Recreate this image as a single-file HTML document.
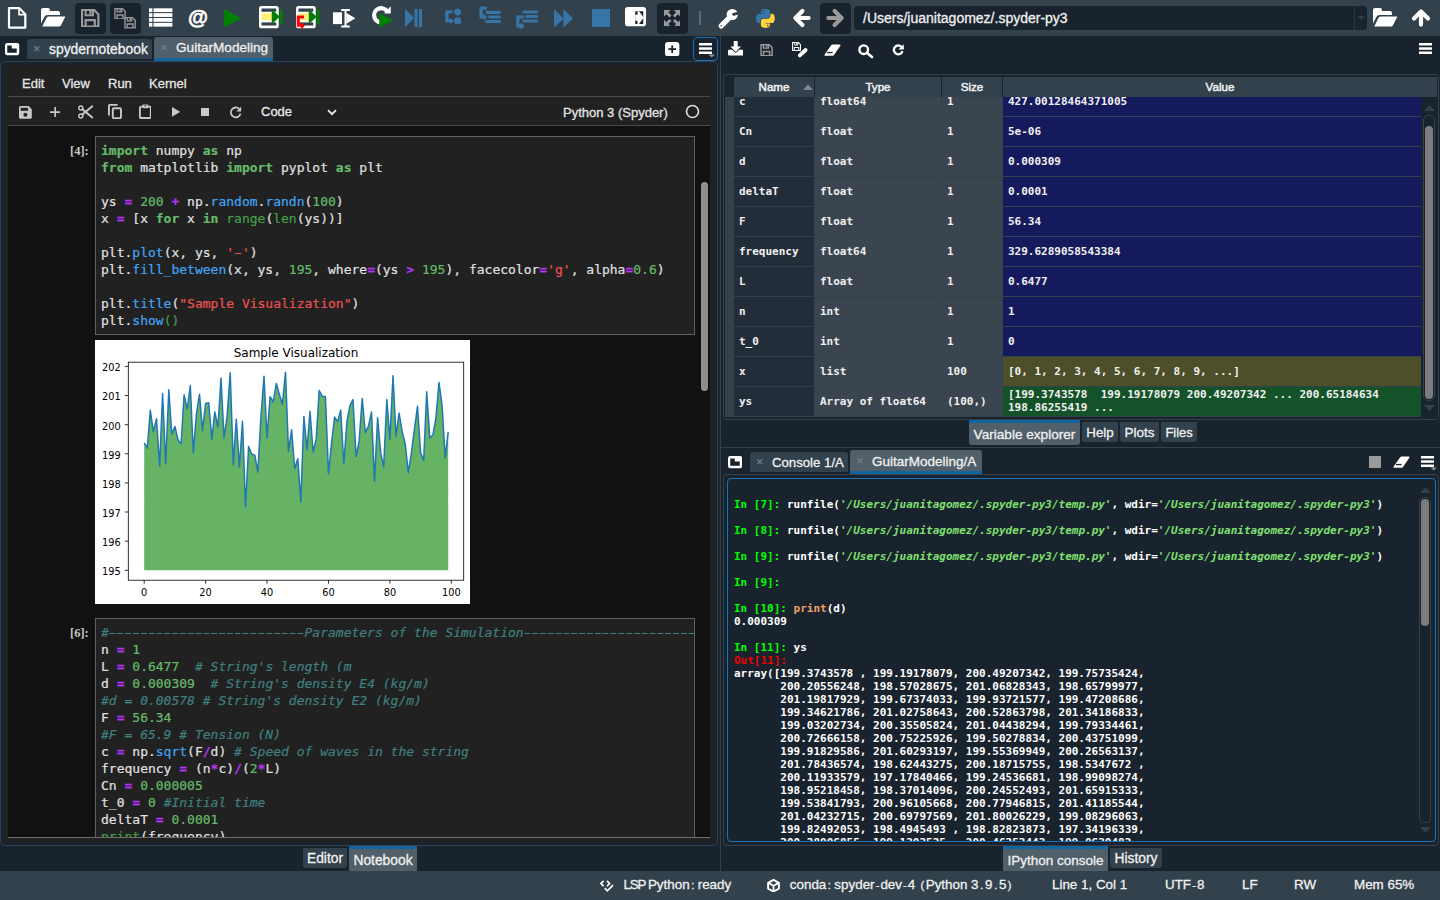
<!DOCTYPE html>
<html lang="en">
<head>
<meta charset="utf-8">
<title>Spyder</title>
<style>
*{box-sizing:border-box;margin:0;padding:0}
html,body{width:1440px;height:900px;overflow:hidden;background:#19232D;color:#F0F0F0;
  font-family:"Liberation Sans",sans-serif;font-size:13px}
.abs{position:absolute}
#topbar{position:absolute;left:0;top:0;width:1440px;height:36px;background:#32414B}
#statusbar{position:absolute;left:0;top:871px;width:1440px;height:29px;background:#32414B}
#statusbar i{font-style:normal;display:inline-block}
#statusbar .nw{letter-spacing:-1.2px;margin-right:-1px}
#statusbar .pc{margin:0 3.5px 0 1.5px;font-size:11px}
#statusbar .ph{margin:0 1.1px;font-size:11px}
#statusbar .pd{margin:0 1.7px;font-size:11px}
#statusbar .pp{margin:0 1.5px;font-size:11px}
#statusbar span{position:absolute;top:6px;font-size:13.4px;white-space:nowrap;color:#F0F0F0}
.ic{position:absolute;display:block}
.darkbtn{position:absolute;background:#19232D;border-radius:4px}
/* tabs */
.tab,.btab,#statusbar span,.ui{-webkit-text-stroke:0.3px currentColor}
.tab{position:absolute;background:#32414B;border-radius:3px 3px 0 0;color:#F0F0F0;font-size:14px;white-space:nowrap}
.tab.sel{background:#505F69;border-bottom:3px solid #1464A0}
.tab .x{position:absolute;color:#73808b;font-size:9px}
.tab .t{position:absolute}
.btab{position:absolute;background:#32414B;border-radius:0 0 3px 3px;color:#F0F0F0;font-size:14px;white-space:nowrap;text-align:center}
.btab.sel{background:#505F69;border-top:3px solid #1464A0}
/* notebook */
#nbpanel{position:absolute;left:4px;top:65px;width:710px;height:777px;background:#212121}
#nbframe{position:absolute;left:0;top:61px;width:718px;height:785px;border:1px solid #32414B;border-radius:5px}
.mono{font-family:"DejaVu Sans Mono","Liberation Mono",monospace}
.code{-webkit-text-stroke:0.2px currentColor;position:absolute;font-family:"DejaVu Sans Mono","Liberation Mono",monospace;font-size:13px;line-height:17px;white-space:pre;color:#E0E0E0}
.dsh{text-shadow:1.3px 0 currentColor,-1.3px 0 currentColor}
.k{color:#66BB6A;font-weight:bold}
.o{color:#B434F0;font-weight:bold}
.n{color:#66BB6A}
.p{color:#42A5F5}
.s{color:#EF5350}
.b{color:#43A047}
.c{color:#408080;font-style:italic}
/* variable explorer */
.vrow{position:absolute;left:727px;width:694px;height:30px}
.vc{position:absolute;top:0;height:29px;font-family:"DejaVu Sans Mono","Liberation Mono",monospace;font-size:11px;font-weight:bold;color:#F0F0F0;white-space:nowrap;line-height:29px;padding-left:5px;overflow:hidden}
.vh{top:0;height:20px;line-height:20px;text-align:center;border-right:1px solid #19232D;font-family:"Liberation Sans",sans-serif}
/* console */
.con{position:absolute;font-family:"DejaVu Sans Mono","Liberation Mono",monospace;font-size:11px;font-weight:bold;line-height:13px;white-space:pre;color:#FFFFFF}
.gi{color:#00FF00}
.ro{color:#EE0000}
.gs{color:#7FE070;font-style:italic}
.or{color:#F0A060}
</style>
</head>
<body>
<div id="topbar"></div>
<!--TOPICONS--><svg class="ic" style="left:7px;top:6px" width="21" height="24" viewBox="0 0 21 24"><path d="M2 2.2 H12.3 L18.3 8.2 V21.6 H2 Z" fill="none" stroke="#FFFFFF" stroke-width="2.2" stroke-linejoin="round"/><path d="M12 2.5 V8.6 H18" fill="none" stroke="#FFFFFF" stroke-width="1.6"/></svg>
<svg class="ic" style="left:41px;top:8px" width="25" height="19" viewBox="0 0 25 19"><path d="M0 2 Q0 0 2 0 H7 Q9 0 9 2 V3 H17 Q19 3 19 5 V7 H6.5 Q4.3 7 3.3 9 L0 15.5 Z" fill="#FFFFFF"/><path d="M1.2 18.5 L5.6 9.7 Q6.2 8.5 7.7 8.5 H24.4 L19.9 17.5 Q19.4 18.5 17.8 18.5 Z" fill="#FFFFFF"/></svg>
<div class="darkbtn" style="left:75px;top:3px;width:31px;height:31px"></div>
<svg class="ic" style="left:81px;top:8.5px" width="18.5" height="18.5" viewBox="0 0 18.5 18.5"><path d="M1 1 H13.2 L17.4 5.2 V17.5 H1 Z" fill="none" stroke="#9A9A9A" stroke-width="2.2" stroke-linejoin="round"/><path d="M4.6 1.4 V6.2 H12 V1.4" fill="none" stroke="#9A9A9A" stroke-width="2"/><rect x="8.3" y="2" width="2.3" height="3.2" fill="#9A9A9A"/><path d="M4.6 17 V11.2 H13.8 V17" fill="none" stroke="#9A9A9A" stroke-width="2.2"/></svg>
<div class="darkbtn" style="left:110px;top:3px;width:31px;height:31px"></div>
<svg class="ic" style="left:113.5px;top:7.5px" width="12.2" height="11.5" viewBox="0 0 18.5 18.5"><path d="M1 1 H13.2 L17.4 5.2 V17.5 H1 Z" fill="none" stroke="#9A9A9A" stroke-width="2.2" stroke-linejoin="round"/><path d="M4.6 1.4 V6.2 H12 V1.4" fill="none" stroke="#9A9A9A" stroke-width="2"/><rect x="8.3" y="2" width="2.3" height="3.2" fill="#9A9A9A"/><path d="M4.6 17 V11.2 H13.8 V17" fill="none" stroke="#9A9A9A" stroke-width="2.2"/></svg>
<svg class="ic" style="left:124px;top:17.3px" width="12.2" height="11.5" viewBox="0 0 18.5 18.5"><path d="M1 1 H13.2 L17.4 5.2 V17.5 H1 Z" fill="none" stroke="#9A9A9A" stroke-width="2.2" stroke-linejoin="round"/><path d="M4.6 1.4 V6.2 H12 V1.4" fill="none" stroke="#9A9A9A" stroke-width="2"/><rect x="8.3" y="2" width="2.3" height="3.2" fill="#9A9A9A"/><path d="M4.6 17 V11.2 H13.8 V17" fill="none" stroke="#9A9A9A" stroke-width="2.2"/></svg>
<svg class="ic" style="left:149.4px;top:7.7px" width="23.4" height="19.2" viewBox="0 0 23.4 19.2"><rect x="0" y="0.30" width="3.4" height="3.8" fill="#FFFFFF"/><rect x="4.5" y="0.30" width="18.9" height="3.8" fill="#FFFFFF"/><rect x="0" y="5.15" width="3.4" height="3.8" fill="#FFFFFF"/><rect x="4.5" y="5.15" width="18.9" height="3.8" fill="#FFFFFF"/><rect x="0" y="10.00" width="3.4" height="3.8" fill="#FFFFFF"/><rect x="4.5" y="10.00" width="18.9" height="3.8" fill="#FFFFFF"/><rect x="0" y="14.85" width="3.4" height="3.8" fill="#FFFFFF"/><rect x="4.5" y="14.85" width="18.9" height="3.8" fill="#FFFFFF"/></svg>
<span class="abs" style="left:188px;top:4px;font-size:20.5px;font-weight:bold;color:#FFFFFF;line-height:26px;-webkit-text-stroke:0.6px #FFFFFF">@</span>
<svg class="ic" style="left:224px;top:8.5px" width="18" height="19" viewBox="0 0 18 19"><path d="M0 0 L17.3 9.3 L0 18.6 Z" fill="#008000"/></svg>
<svg class="ic" style="left:258.5px;top:5.75px" width="24" height="23" viewBox="0 0 24 23"><rect x="0" y="0" width="19.75" height="22.25" rx="2.6" fill="#FFFFFF"/><rect x="2.5" y="2.5" width="14.75" height="3.25" fill="#32414B"/><rect x="2.5" y="16.4" width="14.75" height="3.1" fill="#32414B"/><rect x="2.5" y="7.25" width="10.5" height="7" fill="#FFF176"/><path d="M12.75 3.25 L20.75 10.75 L12.75 18.25 Z" fill="#008000"/><rect x="20.75" y="3.25" width="2.75" height="15" fill="#008000"/></svg>
<svg class="ic" style="left:296px;top:5.75px" width="24" height="24" viewBox="0 0 24 24"><rect x="0" y="0" width="19.75" height="22.25" rx="2.6" fill="#FFFFFF"/><rect x="2.5" y="2.5" width="14.75" height="3.25" fill="#32414B"/><rect x="2.5" y="16.4" width="14.75" height="3.1" fill="#32414B"/><rect x="2.5" y="7.25" width="10.5" height="7" fill="#FFF176"/><path d="M12.75 3.25 L20.75 10.75 L12.75 18.25 Z" fill="#008000"/><rect x="20.75" y="3.25" width="2.75" height="15" fill="#008000"/><path d="M8 10.9 H2.25 V19.2 H5.5" fill="none" stroke="#FF0000" stroke-width="3"/><path d="M5 16.1 L8.9 19.75 L5 23.5 Z" fill="#FF0000"/></svg>
<svg class="ic" style="left:332.5px;top:8.5px" width="23" height="19" viewBox="0 0 23 19"><rect x="0" y="3.3" width="9" height="11.8" fill="#FFFFFF"/><path d="M8.2 1 H16.8 M8.2 17.6 H16.8 M12.5 1 V17.6" stroke="#FFFFFF" stroke-width="2" fill="none"/><path d="M13.3 4 L22.4 9.3 L13.3 14.8 Z" fill="#FFFFFF"/></svg>
<svg class="ic" style="left:370.5px;top:5.2px" width="23" height="24" viewBox="0 0 23 24"><path d="M16.07 6.23 A7.1 7.1 0 1 0 11.48 17.29" fill="none" stroke="#FFFFFF" stroke-width="4.2"/><path d="M19.75 1.3 V8.6 H13.1 Z" fill="#FFFFFF"/><path d="M8.25 8.05 L22.25 15.55 L8.25 23.05 Z" fill="#008000"/></svg>
<svg class="ic" style="left:405px;top:9px" width="18" height="18.5" viewBox="0 0 18 18.5"><path d="M0 0 L9.2 9.1 L0 18.2 Z" fill="#3775A9"/><rect x="9.6" y="0" width="3" height="18.2" fill="#3775A9"/><rect x="14" y="0" width="3.1" height="18.2" fill="#3775A9"/></svg>
<svg class="ic" style="left:445px;top:8px" width="17" height="17" viewBox="0 0 17 17"><circle cx="12.6" cy="4.1" r="3.4" fill="#3775A9"/><circle cx="12.6" cy="12.75" r="3.6" fill="#3775A9"/><path d="M7.4 3.9 H1.9 V12.9 H5.4" fill="none" stroke="#3775A9" stroke-width="3.3" stroke-linejoin="round"/><path d="M5 9.7 L8.9 12.9 L5 16.1 Z" fill="#3775A9"/></svg>
<svg class="ic" style="left:479px;top:5.5px" width="22" height="18" viewBox="0 0 22 18"><path d="M7.9 2.1 H2.1 V11 H4.8" fill="none" stroke="#3775A9" stroke-width="3.3" stroke-linejoin="round"/><path d="M4.5 7.7 L8.3 11 L4.5 14.5 Z" fill="#3775A9"/><rect x="6.75" y="4.75" width="15" height="3.3" rx="0.8" fill="#3775A9"/><rect x="9.4" y="9.6" width="12.35" height="3" rx="0.8" fill="#3775A9"/><rect x="6.4" y="14.1" width="15.35" height="3" rx="0.8" fill="#3775A9"/></svg>
<svg class="ic" style="left:516px;top:10px" width="22.5" height="20" viewBox="0 0 22.5 20"><rect x="6.5" y="0.6" width="15.4" height="3" rx="0.8" fill="#3775A9"/><rect x="9.5" y="5.1" width="12.4" height="3" rx="0.8" fill="#3775A9"/><rect x="6.5" y="9.6" width="15.4" height="3" rx="0.8" fill="#3775A9"/><path d="M8 6.8 H1.8 V16 H5" fill="none" stroke="#3775A9" stroke-width="3.3" stroke-linejoin="round"/><path d="M4.4 12.6 L8.8 16 L4.4 19.4 Z" fill="#3775A9"/></svg>
<svg class="ic" style="left:553.5px;top:8.8px" width="19.5" height="19" viewBox="0 0 19.5 19"><path d="M0 0 L9.6 9.4 L0 18.8 Z M9.4 0 L19 9.4 L9.4 18.8 Z" fill="#3775A9"/></svg>
<svg class="ic" style="left:592px;top:8.5px" width="18" height="18.5" viewBox="0 0 18 18.5"><rect width="18" height="18.5" fill="#3775A9"/></svg>
<svg class="ic" style="left:624.75px;top:7px" width="21" height="19.5" viewBox="0 0 21 19.5"><rect x="0" y="0" width="21" height="19.25" rx="2.8" fill="#FFFFFF"/><rect x="10.25" y="4.25" width="8" height="12.75" fill="#19232D"/><path d="M10.25 7.75 H12.5 V4.25 H14 L18.75 10.5 L14 17 H12.5 V13.75 H10.25 Z" fill="#FFFFFF"/></svg>
<div class="darkbtn" style="left:657px;top:3px;width:31px;height:31px"></div>
<svg class="ic" style="left:663.6px;top:9.8px" width="16.5" height="16.5" viewBox="0 0 16.5 16.5"><g transform="translate(8.2 8.2) scale(1 1)"><path d="M-8.2 -8.2 H-1.6 L-3.9 -5.9 L-0.7 -2.7 L-2.7 -0.7 L-5.9 -3.9 L-8.2 -1.6 Z" fill="#9A9A9A"/></g><g transform="translate(8.2 8.2) scale(-1 1)"><path d="M-8.2 -8.2 H-1.6 L-3.9 -5.9 L-0.7 -2.7 L-2.7 -0.7 L-5.9 -3.9 L-8.2 -1.6 Z" fill="#9A9A9A"/></g><g transform="translate(8.2 8.2) scale(1 -1)"><path d="M-8.2 -8.2 H-1.6 L-3.9 -5.9 L-0.7 -2.7 L-2.7 -0.7 L-5.9 -3.9 L-8.2 -1.6 Z" fill="#9A9A9A"/></g><g transform="translate(8.2 8.2) scale(-1 -1)"><path d="M-8.2 -8.2 H-1.6 L-3.9 -5.9 L-0.7 -2.7 L-2.7 -0.7 L-5.9 -3.9 L-8.2 -1.6 Z" fill="#9A9A9A"/></g></svg>
<div class="abs" style="left:699px;top:11px;width:2px;height:14px;background:#5B6A75"></div>
<svg class="ic" style="left:717px;top:7.5px" width="22" height="22" viewBox="0 0 22 22"><path d="M4.2 17.9 L12 10.2" stroke="#FFFFFF" stroke-width="5.2" stroke-linecap="round"/><circle cx="15.25" cy="6.5" r="5.6" fill="#FFFFFF"/><path d="M16.6 6.3 L23 4.6" stroke="#32414B" stroke-width="2.8" stroke-linecap="round"/><circle cx="4.3" cy="17.8" r="0.8" fill="#32414B"/></svg>
<svg class="ic" style="left:756px;top:9.3px" width="19" height="19" viewBox="0 0 112 113"><path d="M54.918785,9.1927389e-4 C50.335132,0.02221727 45.957846,0.41313697 42.106285,1.0946693 30.760069,3.0991731 28.700036,7.2947714 28.700035,15.032169 l0,10.21875 26.8125,0 0,3.40625 -26.8125,0 -10.0625,0 c-7.792459,0 -14.6157588,4.683717 -16.7499998,13.59375 -2.46181998,10.212966 -2.57101508,16.586023 0,27.25 1.9059283,7.937852 6.4575432,13.593748 14.2499998,13.59375 l9.21875,0 0,-12.25 c0,-8.849902 7.657144,-16.656248 16.75,-16.65625 l26.78125,0 c7.454951,0 13.406253,-6.138164 13.40625,-13.625 l0,-25.53125 c0,-7.2663386 -6.12998,-12.7247771 -13.40625,-13.9374997 C64.281548,0.32794397 59.502438,-0.02037903 54.918785,9.1927389e-4 Z m-14.5,8.21875012611 c2.769547,0 5.03125,2.2986456 5.03125,5.1249996 -2e-6,2.816336 -2.261703,5.09375 -5.03125,5.09375 -2.779476,-1e-6 -5.03125,-2.277415 -5.03125,-5.09375 -1e-6,-2.826353 2.251774,-5.1249996 5.03125,-5.1249996 z" fill="#3776AB"/><path d="m85.637535,28.657169 0,11.90625 c0,9.230755 -7.825895,16.999999 -16.75,17 l-26.78125,0 c-7.335833,0 -13.40625,6.278483 -13.40625,13.625 l0,25.531247 c0,7.266344 6.318588,11.540324 13.40625,13.625004 8.487331,2.49561 16.626237,2.94663 26.78125,0 6.750155,-1.95439 13.406253,-5.88761 13.40625,-13.625004 l0,-10.218747 -26.78125,0 0,-3.40625 26.78125,0 13.406254,0 c7.792461,0 10.696251,-5.435408 13.406241,-13.59375 2.79933,-8.398886 2.68022,-16.475776 0,-27.25 -1.92578,-7.757441 -5.60387,-13.59375 -13.406241,-13.59375 z m-15.0625,64.65625 c2.779478,3e-6 5.03125,2.277417 5.03125,5.093747 -2e-6,2.826354 -2.251775,5.125004 -5.03125,5.125004 -2.76955,0 -5.03125,-2.29865 -5.03125,-5.125004 2e-6,-2.81633 2.261697,-5.093747 5.03125,-5.093747 z" fill="#FFD43B"/></svg>
<svg class="ic" style="left:791.6px;top:8.4px" width="20" height="20" viewBox="0 0 20 20"><path d="M4 10 H16.6 M10.4 3 L3.4 10 L10.4 17" fill="none" stroke="#FFFFFF" stroke-width="4.2" stroke-linecap="round" stroke-linejoin="round"/></svg>
<div class="darkbtn" style="left:820px;top:3px;width:31px;height:31px"></div>
<svg class="ic" style="left:825px;top:8.4px" width="20" height="20" viewBox="0 0 20 20"><g transform="translate(20 0) scale(-1 1)"><path d="M4 10 H16.6 M10.4 3 L3.4 10 L10.4 17" fill="none" stroke="#9A9A9A" stroke-width="4.2" stroke-linecap="round" stroke-linejoin="round"/></g></svg>
<div class="abs" style="left:854px;top:6px;width:513px;height:24px;background:#19232D;border-radius:4px"></div>
<div class="abs" style="left:1354px;top:6px;width:1px;height:24px;background:#2A3642"></div>
<span class="abs ui" style="left:863px;top:10px;font-size:14px;color:#F0F0F0;white-space:nowrap">/Users/juanitagomez/.spyder-py3</span>
<svg class="ic" style="left:1357.5px;top:16px" width="7" height="4" viewBox="0 0 7 4"><path d="M0 0 H7 L3.5 3.8 Z" fill="#32414B"/></svg>
<svg class="ic" style="left:1373px;top:7.8px" width="25" height="19" viewBox="0 0 25 19"><path d="M0 2 Q0 0 2 0 H7 Q9 0 9 2 V3 H17 Q19 3 19 5 V7 H6.5 Q4.3 7 3.3 9 L0 15.5 Z" fill="#FFFFFF"/><path d="M1.2 18.5 L5.6 9.7 Q6.2 8.5 7.7 8.5 H24.4 L19.9 17.5 Q19.4 18.5 17.8 18.5 Z" fill="#FFFFFF"/></svg>
<svg class="ic" style="left:1410.6px;top:8px" width="20" height="20" viewBox="0 0 20 20"><g transform="translate(20 0) rotate(90)"><path d="M4 10 H16.6 M10.4 3 L3.4 10 L10.4 17" fill="none" stroke="#FFFFFF" stroke-width="4.2" stroke-linecap="round" stroke-linejoin="round"/></g></svg><!--/TOPICONS-->

<!-- LEFT PANE : notebook -->
<div id="nbframe"></div>
<div id="nbpanel"></div>


<!-- notebook menu + toolbar -->
<div class="abs ui" style="left:8px;top:70px;width:702px;height:27px;font-size:13px;color:#e4e4e4">
  <span class="abs" style="left:14px;top:6px">Edit</span>
  <span class="abs" style="left:54px;top:6px">View</span>
  <span class="abs" style="left:100px;top:6px">Run</span>
  <span class="abs" style="left:141px;top:6px">Kernel</span>
</div>
<div class="abs" style="left:8px;top:96px;width:702px;height:1px;background:#4a4a4a"></div>
<div class="abs" style="left:8px;top:125px;width:702px;height:1px;background:#4a4a4a"></div>
<div id="nbtools"></div>
<span class="abs ui" style="left:261px;top:104px;font-size:13px;color:#e8e8e8">Code</span>
<span class="abs ui" style="left:563px;top:105px;font-size:13px;color:#e4e4e4">Python 3 (Spyder)</span>

<!-- notebook scroll area -->
<div class="abs" id="nbscroll" style="left:8px;top:126px;width:702px;height:712px;background:#111111;overflow:hidden;border-bottom:1px solid #6e6e6e">
  <!-- cell 1 -->
  <span class="abs" style="left:62px;top:18px;font-family:'Liberation Serif',serif;font-size:12.5px;font-weight:bold;color:#c6c6c6">[4]:</span>
  <div class="abs" style="left:87px;top:10px;width:600px;height:199px;background:#212121;border:1px solid #616161"></div>
  <div class="code" style="left:93px;top:16px"><span class="k">import</span> numpy <span class="k">as</span> np
<span class="k">from</span> matplotlib <span class="k">import</span> pyplot <span class="k">as</span> plt

ys <span class="o">=</span> <span class="n">200</span> <span class="o">+</span> np.<span class="p">random</span>.<span class="p">randn</span>(<span class="n">100</span>)
x <span class="o">=</span> [x <span class="k">for</span> x <span class="k">in</span> <span class="b">range</span>(<span class="b">len</span>(ys))]

plt.<span class="p">plot</span>(x, ys, <span class="s">'<span class="dsh">-</span>'</span>)
plt.<span class="p">fill_between</span>(x, ys, <span class="n">195</span>, where<span class="o">=</span>(ys <span class="o">&gt;</span> <span class="n">195</span>), facecolor<span class="o">=</span><span class="s">'g'</span>, alpha<span class="o">=</span><span class="n">0.6</span>)

plt.<span class="p">title</span>(<span class="s">"Sample Visualization"</span>)
plt.<span class="p">show</span><span class="b">()</span></div>
  <!-- plot output -->
  <!--PLOT--><svg class="abs" style="left:87px;top:214px" width="375" height="264" viewBox="0 0 375 264" font-family="'DejaVu Sans','Liberation Sans',sans-serif" fill="#000">
<rect width="375" height="264" fill="#fff"/>
<polygon points="49.2,230.3 49.2,102.9 52.3,108.2 55.3,70.3 58.4,91.7 61.5,78.7 64.6,126.3 67.6,53.5 70.7,123.7 73.8,49.8 76.8,94.2 79.9,86.5 83.0,100.0 86.1,103.7 89.1,54.7 92.2,69.3 95.3,45.6 98.3,112.9 101.4,74.3 104.5,54.2 107.5,90.7 110.6,63.5 113.7,62.7 116.8,99.1 119.8,71.9 122.9,87.0 126.0,38.0 129.0,97.7 132.1,76.9 135.2,32.7 138.3,124.7 141.3,79.2 144.4,127.3 147.5,81.2 150.5,166.8 153.6,106.6 156.7,114.0 159.8,115.2 162.8,132.1 165.9,77.5 169.0,36.3 172.0,98.1 175.1,56.7 178.2,62.0 181.3,43.5 184.3,54.3 187.4,64.3 190.5,32.2 193.5,111.4 196.6,89.8 199.7,128.5 202.8,118.8 205.8,162.1 208.9,76.5 212.0,110.0 215.0,71.3 218.1,112.0 221.2,99.5 224.2,50.6 227.3,56.4 230.4,56.4 233.5,133.9 236.5,103.6 239.6,77.1 242.7,81.7 245.7,70.1 248.8,124.0 251.9,81.7 255.0,65.4 258.0,59.6 261.1,116.7 264.2,100.4 267.2,58.4 270.3,92.5 273.4,86.4 276.5,72.1 279.5,141.2 282.6,77.7 285.7,112.9 288.7,126.9 291.8,59.6 294.9,99.5 298.0,35.7 301.0,96.3 304.1,73.0 307.2,91.6 310.2,103.6 313.3,132.7 316.4,112.9 319.4,89.3 322.5,66.3 325.6,112.9 328.7,120.5 331.7,51.7 334.8,98.1 337.9,94.9 340.9,78.5 344.0,42.4 347.1,65.7 350.2,117.9 353.2,91.9 353.2,230.3" fill="#008000" fill-opacity="0.6"/>
<polyline points="49.2,102.9 52.3,108.2 55.3,70.3 58.4,91.7 61.5,78.7 64.6,126.3 67.6,53.5 70.7,123.7 73.8,49.8 76.8,94.2 79.9,86.5 83.0,100.0 86.1,103.7 89.1,54.7 92.2,69.3 95.3,45.6 98.3,112.9 101.4,74.3 104.5,54.2 107.5,90.7 110.6,63.5 113.7,62.7 116.8,99.1 119.8,71.9 122.9,87.0 126.0,38.0 129.0,97.7 132.1,76.9 135.2,32.7 138.3,124.7 141.3,79.2 144.4,127.3 147.5,81.2 150.5,166.8 153.6,106.6 156.7,114.0 159.8,115.2 162.8,132.1 165.9,77.5 169.0,36.3 172.0,98.1 175.1,56.7 178.2,62.0 181.3,43.5 184.3,54.3 187.4,64.3 190.5,32.2 193.5,111.4 196.6,89.8 199.7,128.5 202.8,118.8 205.8,162.1 208.9,76.5 212.0,110.0 215.0,71.3 218.1,112.0 221.2,99.5 224.2,50.6 227.3,56.4 230.4,56.4 233.5,133.9 236.5,103.6 239.6,77.1 242.7,81.7 245.7,70.1 248.8,124.0 251.9,81.7 255.0,65.4 258.0,59.6 261.1,116.7 264.2,100.4 267.2,58.4 270.3,92.5 273.4,86.4 276.5,72.1 279.5,141.2 282.6,77.7 285.7,112.9 288.7,126.9 291.8,59.6 294.9,99.5 298.0,35.7 301.0,96.3 304.1,73.0 307.2,91.6 310.2,103.6 313.3,132.7 316.4,112.9 319.4,89.3 322.5,66.3 325.6,112.9 328.7,120.5 331.7,51.7 334.8,98.1 337.9,94.9 340.9,78.5 344.0,42.4 347.1,65.7 350.2,117.9 353.2,91.9" fill="none" stroke="#1f77b4" stroke-width="1.5" stroke-linejoin="round" stroke-linecap="butt"/>
<rect x="33.3" y="22.2" width="335.4" height="218.0" fill="none" stroke="#000" stroke-width="0.8"/>
<g stroke="#000" stroke-width="0.8"><line x1="29.8" y1="230.3" x2="33.3" y2="230.3"/><line x1="29.8" y1="201.2" x2="33.3" y2="201.2"/><line x1="29.8" y1="172.0" x2="33.3" y2="172.0"/><line x1="29.8" y1="142.9" x2="33.3" y2="142.9"/><line x1="29.8" y1="113.8" x2="33.3" y2="113.8"/><line x1="29.8" y1="84.7" x2="33.3" y2="84.7"/><line x1="29.8" y1="55.5" x2="33.3" y2="55.5"/><line x1="29.8" y1="26.4" x2="33.3" y2="26.4"/><line x1="49.2" y1="240.2" x2="49.2" y2="243.7"/><line x1="110.6" y1="240.2" x2="110.6" y2="243.7"/><line x1="172.0" y1="240.2" x2="172.0" y2="243.7"/><line x1="233.5" y1="240.2" x2="233.5" y2="243.7"/><line x1="294.9" y1="240.2" x2="294.9" y2="243.7"/><line x1="356.3" y1="240.2" x2="356.3" y2="243.7"/></g>
<g font-size="9.8"><text x="25.7" y="235.1" text-anchor="end">195</text><text x="25.7" y="206.0" text-anchor="end">196</text><text x="25.7" y="176.8" text-anchor="end">197</text><text x="25.7" y="147.7" text-anchor="end">198</text><text x="25.7" y="118.6" text-anchor="end">199</text><text x="25.7" y="89.5" text-anchor="end">200</text><text x="25.7" y="60.3" text-anchor="end">201</text><text x="25.7" y="31.2" text-anchor="end">202</text><text x="49.2" y="256.2" text-anchor="middle">0</text><text x="110.6" y="256.2" text-anchor="middle">20</text><text x="172.0" y="256.2" text-anchor="middle">40</text><text x="233.5" y="256.2" text-anchor="middle">60</text><text x="294.9" y="256.2" text-anchor="middle">80</text><text x="356.3" y="256.2" text-anchor="middle">100</text></g>
<text x="201.0" y="16.9" font-size="12" text-anchor="middle">Sample Visualization</text>
</svg><!--/PLOT-->
  <!-- cell 2 -->
  <span class="abs" style="left:62px;top:500px;font-family:'Liberation Serif',serif;font-size:12.5px;font-weight:bold;color:#c6c6c6">[6]:</span>
  <div class="abs" style="left:87px;top:492px;width:600px;height:261px;background:#212121;border:1px solid #616161"></div>
  <div class="code" style="left:93px;top:498px;width:593px;overflow:hidden"><span class="c">#<span class="dsh">-------------------------</span>Parameters of the Simulation<span class="dsh">-------------------------</span></span>
n <span class="o">=</span> <span class="n">1</span>
L <span class="o">=</span> <span class="n">0.6477</span>  <span class="c"># String's length (m</span>
d <span class="o">=</span> <span class="n">0.000309</span>  <span class="c"># String's density E4 (kg/m)</span>
<span class="c">#d = 0.00578 # String's density E2 (kg/m)</span>
F <span class="o">=</span> <span class="n">56.34</span>
<span class="c">#F = 65.9 # Tension (N)</span>
c <span class="o">=</span> np.<span class="p">sqrt</span>(F<span class="o">/</span>d) <span class="c"># Speed of waves in the string</span>
frequency <span class="o">=</span> (n<span class="o">*</span>c)<span class="o">/</span>(<span class="n">2</span><span class="o">*</span>L)
Cn <span class="o">=</span> <span class="n">0.000005</span>
t_0 <span class="o">=</span> <span class="n">0</span> <span class="c">#Initial time</span>
deltaT <span class="o">=</span> <span class="n">0.0001</span>
<span class="b">print</span>(frequency)</div>
</div>
<!-- notebook scrollbar -->
<div class="abs" style="left:700.6px;top:182px;width:7.8px;height:209.4px;background:#8e8e8e;border-radius:4px"></div>

<!--RIGHT--><!-- VARIABLE EXPLORER -->
<div class="abs" style="left:723px;top:74px;width:716px;height:346px;border:1px solid #32414B;border-radius:4px"></div>
<div class="abs" style="left:725px;top:97px;width:696px;height:320px;overflow:hidden;background:#32414B">
<div class="vrow" style="left:0;top:-10px;width:696px"><div class="vc" style="left:0;width:8px;background:#32414B;padding:0"></div><div class="vc" style="left:9px;width:80px;background:#232D39">c</div><div class="vc" style="left:90px;width:126px;background:#3B454F">float64</div><div class="vc" style="left:217px;width:60px;background:#3B454F">1</div><div class="vc" style="left:278px;width:418px;background:#151A5C;">427.00128464371005</div></div>
<div class="vrow" style="left:0;top:20px;width:696px"><div class="vc" style="left:0;width:8px;background:#32414B;padding:0"></div><div class="vc" style="left:9px;width:80px;background:#232D39">Cn</div><div class="vc" style="left:90px;width:126px;background:#3B454F">float</div><div class="vc" style="left:217px;width:60px;background:#3B454F">1</div><div class="vc" style="left:278px;width:418px;background:#151A5C;">5e-06</div></div>
<div class="vrow" style="left:0;top:50px;width:696px"><div class="vc" style="left:0;width:8px;background:#32414B;padding:0"></div><div class="vc" style="left:9px;width:80px;background:#232D39">d</div><div class="vc" style="left:90px;width:126px;background:#3B454F">float</div><div class="vc" style="left:217px;width:60px;background:#3B454F">1</div><div class="vc" style="left:278px;width:418px;background:#151A5C;">0.000309</div></div>
<div class="vrow" style="left:0;top:80px;width:696px"><div class="vc" style="left:0;width:8px;background:#32414B;padding:0"></div><div class="vc" style="left:9px;width:80px;background:#232D39">deltaT</div><div class="vc" style="left:90px;width:126px;background:#3B454F">float</div><div class="vc" style="left:217px;width:60px;background:#3B454F">1</div><div class="vc" style="left:278px;width:418px;background:#151A5C;">0.0001</div></div>
<div class="vrow" style="left:0;top:110px;width:696px"><div class="vc" style="left:0;width:8px;background:#32414B;padding:0"></div><div class="vc" style="left:9px;width:80px;background:#232D39">F</div><div class="vc" style="left:90px;width:126px;background:#3B454F">float</div><div class="vc" style="left:217px;width:60px;background:#3B454F">1</div><div class="vc" style="left:278px;width:418px;background:#151A5C;">56.34</div></div>
<div class="vrow" style="left:0;top:140px;width:696px"><div class="vc" style="left:0;width:8px;background:#32414B;padding:0"></div><div class="vc" style="left:9px;width:80px;background:#232D39">frequency</div><div class="vc" style="left:90px;width:126px;background:#3B454F">float64</div><div class="vc" style="left:217px;width:60px;background:#3B454F">1</div><div class="vc" style="left:278px;width:418px;background:#151A5C;">329.6289058543384</div></div>
<div class="vrow" style="left:0;top:170px;width:696px"><div class="vc" style="left:0;width:8px;background:#32414B;padding:0"></div><div class="vc" style="left:9px;width:80px;background:#232D39">L</div><div class="vc" style="left:90px;width:126px;background:#3B454F">float</div><div class="vc" style="left:217px;width:60px;background:#3B454F">1</div><div class="vc" style="left:278px;width:418px;background:#151A5C;">0.6477</div></div>
<div class="vrow" style="left:0;top:200px;width:696px"><div class="vc" style="left:0;width:8px;background:#32414B;padding:0"></div><div class="vc" style="left:9px;width:80px;background:#232D39">n</div><div class="vc" style="left:90px;width:126px;background:#3B454F">int</div><div class="vc" style="left:217px;width:60px;background:#3B454F">1</div><div class="vc" style="left:278px;width:418px;background:#151A5C;">1</div></div>
<div class="vrow" style="left:0;top:230px;width:696px"><div class="vc" style="left:0;width:8px;background:#32414B;padding:0"></div><div class="vc" style="left:9px;width:80px;background:#232D39">t_0</div><div class="vc" style="left:90px;width:126px;background:#3B454F">int</div><div class="vc" style="left:217px;width:60px;background:#3B454F">1</div><div class="vc" style="left:278px;width:418px;background:#151A5C;">0</div></div>
<div class="vrow" style="left:0;top:260px;width:696px"><div class="vc" style="left:0;width:8px;background:#32414B;padding:0"></div><div class="vc" style="left:9px;width:80px;background:#232D39">x</div><div class="vc" style="left:90px;width:126px;background:#3B454F">list</div><div class="vc" style="left:217px;width:60px;background:#3B454F">100</div><div class="vc" style="left:278px;width:418px;background:#4D4F2A;">[0, 1, 2, 3, 4, 5, 6, 7, 8, 9, ...]</div></div>
<div class="vrow" style="left:0;top:290px;width:696px"><div class="vc" style="left:0;width:8px;background:#32414B;padding:0"></div><div class="vc" style="left:9px;width:80px;background:#232D39">ys</div><div class="vc" style="left:90px;width:126px;background:#3B454F">Array of float64</div><div class="vc" style="left:217px;width:60px;background:#3B454F">(100,)</div><div class="vc" style="left:278px;width:418px;background:#145229;line-height:13px;padding-top:1px;white-space:pre">[199.3743578  199.19178079 200.49207342 ... 200.65184634
198.86255419 ...</div></div>
</div>
<div class="abs" style="left:725px;top:77px;width:712px;height:20px;background:#32414B;font-size:11.6px;font-weight:normal;-webkit-text-stroke:0.5px #F0F0F0;color:#F0F0F0"><div class="abs" style="left:0;top:0;width:9px;height:20px;background:#19232D"></div><div class="abs vh" style="left:9px;width:81px">Name</div><div class="abs vh" style="left:90px;width:127px">Type</div><div class="abs vh" style="left:217px;width:61px">Size</div><div class="abs vh" style="left:278px;width:434px;border-right:none">Value</div><svg class="abs" style="left:77px;top:6px" width="12" height="8" viewBox="0 0 12 8"><path d="M1 7 L6 1.5 L11 7 Z" fill="#7F8C97"/></svg></div>
<div class="abs" style="left:1421px;top:99px;width:17px;height:319px;background:#19232D"></div>
<div class="abs" style="left:1423px;top:115px;width:12px;height:286px;border:1px solid #32414B;border-radius:5px"></div>
<div class="abs" style="left:1425px;top:125.5px;width:8px;height:273.5px;background:#7C7C7C;border-radius:4px"></div>
<svg class="abs" style="left:1423.5px;top:105px" width="11" height="6" viewBox="0 0 11 6"><path d="M0 6 L5.5 0 L11 6 Z" fill="#32414B"/></svg>
<svg class="abs" style="left:1423.5px;top:405px" width="11" height="6" viewBox="0 0 11 6"><path d="M0 0 L5.5 6 L11 0 Z" fill="#32414B"/></svg>
<div class="btab sel" style="left:969px;top:420px;width:111px;height:25px;line-height:20px;font-size:13.6px;padding-top:2px">Variable explorer</div>
<div class="btab" style="left:1082px;top:422px;width:36px;height:20px;line-height:22px;font-size:13.3px">Help</div>
<div class="btab" style="left:1120px;top:422px;width:39px;height:20px;line-height:22px;font-size:13.5px">Plots</div>
<div class="btab" style="left:1161px;top:422px;width:36px;height:20px;line-height:22px;font-size:12.9px">Files</div>
<div class="abs" style="left:721px;top:447px;width:719px;height:1px;background:#32414B"></div>

<div class="abs" style="left:720px;top:36px;width:1px;height:836px;background:#32414B"></div>
<!-- CONSOLE -->
<div class="tab" style="left:750px;top:452px;width:98px;height:20px"><span class="x" style="left:6px;top:5px">✕</span><span class="t" style="left:22px;top:3px;font-size:13.2px">Console 1/A</span></div>
<div class="tab sel" style="left:850px;top:450px;width:132px;height:24px"><span class="x" style="left:6px;top:6px">✕</span><span class="t" style="left:22px;top:4px;font-size:13.5px">GuitarModeling/A</span></div>
<div class="abs" style="left:723px;top:474px;width:716px;height:372px;border:1px solid #32414B;border-radius:4px"></div>
<div class="abs" style="left:727px;top:478px;width:709px;height:364px;border:1px solid #1A72BB;border-radius:4px;overflow:hidden">
<div class="con" style="left:6px;top:6px">
<span class="gi">In [7]:</span> runfile(<span class="gs">'/Users/juanitagomez/.spyder-py3/temp.py'</span>, wdir=<span class="gs">'/Users/juanitagomez/.spyder-py3'</span>)

<span class="gi">In [8]:</span> runfile(<span class="gs">'/Users/juanitagomez/.spyder-py3/temp.py'</span>, wdir=<span class="gs">'/Users/juanitagomez/.spyder-py3'</span>)

<span class="gi">In [9]:</span> runfile(<span class="gs">'/Users/juanitagomez/.spyder-py3/temp.py'</span>, wdir=<span class="gs">'/Users/juanitagomez/.spyder-py3'</span>)

<span class="gi">In [9]:</span> 

<span class="gi">In [10]:</span> <span class="or">print</span>(d)
0.000309

<span class="gi">In [11]:</span> ys
<span class="ro">Out[11]:</span> 
array([199.3743578 , 199.19178079, 200.49207342, 199.75735424,
       200.20556248, 198.57028675, 201.06828343, 198.65799977,
       201.19817929, 199.67374033, 199.93721577, 199.47208686,
       199.34621786, 201.02758643, 200.52863798, 201.34186833,
       199.03202734, 200.35505824, 201.04438294, 199.79334461,
       200.72666158, 200.75225926, 199.50278834, 200.43751099,
       199.91829586, 201.60293197, 199.55369949, 200.26563137,
       201.78436574, 198.62443275, 200.18715755, 198.5347672 ,
       200.11933579, 197.17840466, 199.24536681, 198.99098274,
       198.95218458, 198.37014096, 200.24552493, 201.65915333,
       199.53841793, 200.96105668, 200.77946815, 201.41185544,
       201.04232715, 200.69797569, 201.80026229, 199.08296063,
       199.82492053, 198.4945493 , 198.82823873, 197.34196339,
       200.28006855, 199.1303525 , 200.46253443, 199.0630482 ,</div>
</div>
<div class="abs" style="left:1419px;top:497px;width:12px;height:326px;border:1px solid #32414B;border-radius:5px"></div>
<div class="abs" style="left:1421px;top:499px;width:8.2px;height:127px;background:#7C7C7C;border-radius:4px"></div>
<svg class="abs" style="left:1419.5px;top:487px" width="11" height="6" viewBox="0 0 11 6"><path d="M0 6 L5.5 0 L11 6 Z" fill="#32414B"/></svg>
<svg class="abs" style="left:1419.5px;top:827px" width="11" height="6" viewBox="0 0 11 6"><path d="M0 0 L5.5 6 L11 0 Z" fill="#32414B"/></svg>
<div class="btab sel" style="left:1003px;top:846px;width:105px;height:26px;line-height:20px;padding-top:2px;font-size:13.5px">IPython console</div>
<div class="btab" style="left:1110px;top:848px;width:52px;height:20px;line-height:22px;font-size:13.8px">History</div>
<div class="btab" style="left:303px;top:848px;width:44px;height:20px;line-height:22px;font-size:13.8px">Editor</div>
<div class="btab sel" style="left:349px;top:846px;width:68px;height:26px;line-height:20px;padding-top:2px;font-size:13.8px">Notebook</div>
<div class="tab" style="left:27px;top:39px;width:125px;height:20px"><span class="x" style="left:6px;top:5px">✕</span><span class="t" style="left:22px;top:2px;font-size:13.9px">spydernotebook</span></div>
<div class="tab sel" style="left:154px;top:37px;width:119px;height:24px"><span class="x" style="left:6px;top:6px">✕</span><span class="t" style="left:22px;top:3px;font-size:13.6px">GuitarModeling</span></div><!--/RIGHT-->
<!-- STATUS BAR -->
<div id="statusbar">
  <span style="left:623.5px"><i class="nw">LSP</i> Python<i class="pc">:</i>ready</span>
  <span style="left:789.8px">conda<i class="pc">:</i>spyder<i class="ph">-</i>dev<i class="ph">-</i>4 <i class="pp">(</i>Python 3<i class="pd">.</i>9<i class="pd">.</i>5<i class="pp">)</i></span>
  <span style="left:1052px">Line 1, Col 1</span>
  <span style="left:1165px">UTF<i class="ph">-</i>8</span>
  <span style="left:1242px">LF</span>
  <span style="left:1294px">RW</span>
  <span style="left:1354px">Mem 65%</span>
</div>
<!--ICONS2--><svg class="ic" style="left:18.5px;top:105.7px" width="13" height="13" viewBox="0 0 13 13"><path d="M1.6 0 H9.6 L12.8 3.2 V11.2 Q12.8 12.8 11.2 12.8 H1.6 Q0 12.8 0 11.2 V1.6 Q0 0 1.6 0 Z" fill="#C8C8C8"/><rect x="1.7" y="1.8" width="7.4" height="3" fill="#212121"/><circle cx="6.4" cy="8.8" r="2" fill="#212121"/></svg>
<svg class="ic" style="left:50px;top:106.8px" width="10.4" height="10.4" viewBox="0 0 10.4 10.4"><path d="M5.2 0 V10.4 M0 5.2 H10.4" stroke="#C8C8C8" stroke-width="1.7"/></svg>
<svg class="ic" style="left:77.5px;top:105px" width="15" height="14" viewBox="0 0 15 14"><circle cx="2.8" cy="2.9" r="2" fill="none" stroke="#C8C8C8" stroke-width="1.5"/><circle cx="2.8" cy="10.9" r="2" fill="none" stroke="#C8C8C8" stroke-width="1.5"/><path d="M4.3 4.3 L14.3 12.6 M4.3 9.5 L14.3 1.2" stroke="#C8C8C8" stroke-width="2" stroke-linecap="round"/></svg>
<svg class="ic" style="left:107.5px;top:104.2px" width="14" height="15.2" viewBox="0 0 14 15.2"><rect x="4.8" y="4.2" width="8.2" height="10" rx="1.2" fill="none" stroke="#C8C8C8" stroke-width="1.9"/><path d="M9.6 0.9 H2.2 Q0.9 0.9 0.9 2.2 V11.4" fill="none" stroke="#C8C8C8" stroke-width="1.9"/></svg>
<svg class="ic" style="left:138.7px;top:103.8px" width="12.8" height="15" viewBox="0 0 12.8 15"><rect x="0.9" y="2.6" width="10.9" height="11.4" rx="1.2" fill="none" stroke="#C8C8C8" stroke-width="1.9"/><rect x="3.4" y="0.6" width="5.9" height="3.6" rx="1" fill="#C8C8C8"/><circle cx="6.35" cy="1.8" r="0.8" fill="#212121"/><rect x="3" y="5" width="6.7" height="1" fill="#212121"/></svg>
<svg class="ic" style="left:171.9px;top:107.3px" width="8.4" height="9.8" viewBox="0 0 8.4 9.8"><path d="M0 0 L8.2 4.85 L0 9.7 Z" fill="#C8C8C8"/></svg>
<svg class="ic" style="left:200.6px;top:108px" width="8.8" height="8.2" viewBox="0 0 8.8 8.2"><rect width="8.8" height="8.2" fill="#C8C8C8"/></svg>
<svg class="ic" style="left:228.8px;top:105.6px" width="13" height="13" viewBox="0 0 13 13"><path d="M10.4 3.1 A4.9 4.9 0 1 0 11.5 7.6" fill="none" stroke="#C8C8C8" stroke-width="1.8"/><path d="M12.2 0.7 V5.6 H7.3 Z" fill="#C8C8C8"/></svg>
<svg class="ic" style="left:327.3px;top:108.6px" width="10" height="7" viewBox="0 0 10 7"><path d="M1 1.2 L5 5.2 L9 1.2" fill="none" stroke="#E8E8E8" stroke-width="1.9"/></svg>
<svg class="ic" style="left:684.5px;top:104px" width="15" height="15" viewBox="0 0 15 15"><circle cx="7.5" cy="7.5" r="6" fill="none" stroke="#E0E0E0" stroke-width="1.6"/></svg>
<svg class="ic" style="left:5px;top:43px" width="14.5" height="12.5" viewBox="0 0 14.5 12.5"><rect x="0" y="0" width="14.25" height="12.25" rx="2.2" fill="#FFFFFF"/><path d="M2.25 2.5 H6.75 V5.5 H11.75 V9.75 H2.25 Z" fill="#19232D"/></svg>
<svg class="ic" style="left:665px;top:41.5px" width="14.5" height="14.5" viewBox="0 0 14.5 14.5"><rect width="14.4" height="14.4" rx="3" fill="#FFFFFF"/><path d="M7.2 3.4 V11 M3.4 7.2 H11" stroke="#19232D" stroke-width="1.8"/></svg>
<div class="abs" style="left:693px;top:37px;width:25px;height:24px;border:1px solid #1A72BB;border-radius:4px;background:#19232D"></div>
<svg class="ic" style="left:698.6px;top:43px" width="17" height="15" viewBox="0 0 17 15"><rect x="0" y="0" width="13" height="2.5" fill="#FFFFFF"/><rect x="0" y="4.3" width="13" height="2.5" fill="#FFFFFF"/><rect x="0" y="8.5" width="13" height="2.5" fill="#FFFFFF"/><path d="M9.4 11.4 H16 L12.7 14.4 Z" fill="#8A949C"/></svg>
<svg class="ic" style="left:727.5px;top:41.2px" width="15.4" height="14.8" viewBox="0 0 15.4 14.8"><path d="M5.7 0 H9.7 V5.6 H13 L7.7 10.9 L2.4 5.6 H5.7 Z" fill="#FFFFFF"/><path d="M0.8 8.8 H4.2 L7.7 12 L11.2 8.8 H14.6 Q15.4 8.8 15.4 9.6 V13.8 Q15.4 14.6 14.6 14.6 H0.8 Q0 14.6 0 13.8 V9.6 Q0 8.8 0.8 8.8 Z" fill="#FFFFFF"/></svg>
<svg class="ic" style="left:760.4px;top:43.6px" width="13.2" height="12.4" viewBox="0 0 18.5 18.5"><path d="M1 1 H13.2 L17.4 5.2 V17.5 H1 Z" fill="none" stroke="#9A9A9A" stroke-width="2.2" stroke-linejoin="round"/><path d="M4.6 1.4 V6.2 H12 V1.4" fill="none" stroke="#9A9A9A" stroke-width="2"/><rect x="8.3" y="2" width="2.3" height="3.2" fill="#9A9A9A"/><path d="M4.6 17 V11.2 H13.8 V17" fill="none" stroke="#9A9A9A" stroke-width="2.2"/></svg>
<svg class="ic" style="left:791.8px;top:42.4px" width="9" height="9" viewBox="0 0 18.5 18.5"><path d="M1 1 H13.2 L17.4 5.2 V17.5 H1 Z" fill="none" stroke="#FFFFFF" stroke-width="2.2" stroke-linejoin="round"/><path d="M4.6 1.4 V6.2 H12 V1.4" fill="none" stroke="#FFFFFF" stroke-width="2"/><rect x="8.3" y="2" width="2.3" height="3.2" fill="#FFFFFF"/><path d="M4.6 17 V11.2 H13.8 V17" fill="none" stroke="#FFFFFF" stroke-width="2.2"/></svg>
<svg class="ic" style="left:796px;top:46px" width="13" height="13" viewBox="0 0 13 13"><path d="M9.6 4 L3.8 9.4" stroke="#FFFFFF" stroke-width="3.8" stroke-linecap="round"/></svg>
<svg class="ic" style="left:823.5px;top:43.8px" width="17.4" height="12.4" viewBox="0 0 17.4 12.4"><path d="M8.6 0.6 H15.4 Q17.2 0.6 16.2 2.1 L10 10.9 Q9.4 11.8 8.2 11.8 H1.6 Q-0.2 11.8 0.8 10.3 L7 1.5 Q7.6 0.6 8.6 0.6 Z" fill="#FFFFFF"/><rect x="3" y="7.9" width="5.6" height="1.3" fill="#19232D"/></svg>
<svg class="ic" style="left:856.5px;top:42.5px" width="17" height="16" viewBox="0 0 17 16"><circle cx="6.7" cy="6.7" r="4.3" fill="none" stroke="#FFFFFF" stroke-width="2.4"/><path d="M9.8 9.8 L15 14" stroke="#FFFFFF" stroke-width="2.6" stroke-linecap="round"/></svg>
<svg class="ic" style="left:892px;top:43.8px" width="12.5" height="12" viewBox="0 0 12.5 12"><path d="M9.6 3 A4.4 4.4 0 1 0 10.5 7.2" fill="none" stroke="#FFFFFF" stroke-width="2.3"/><path d="M11.8 0.3 V5.6 H6.5 Z" fill="#FFFFFF"/></svg>
<svg class="ic" style="left:1419.4px;top:43.4px" width="14" height="12" viewBox="0 0 14 12"><rect x="0" y="0" width="13" height="2.5" fill="#FFFFFF"/><rect x="0" y="4.3" width="13" height="2.5" fill="#FFFFFF"/><rect x="0" y="8.5" width="13" height="2.5" fill="#FFFFFF"/></svg>
<svg class="ic" style="left:727.9px;top:456.1px" width="14.5" height="12.5" viewBox="0 0 14.5 12.5"><rect x="0" y="0" width="14.25" height="12.25" rx="2.2" fill="#FFFFFF"/><path d="M2.25 2.5 H6.75 V5.5 H11.75 V9.75 H2.25 Z" fill="#19232D"/></svg>
<svg class="ic" style="left:1368.8px;top:455.5px" width="12.6" height="12.6" viewBox="0 0 12.6 12.6"><rect width="12.5" height="12.5" fill="#9A9A9A"/></svg>
<svg class="ic" style="left:1392.8px;top:455.6px" width="17.4" height="12.4" viewBox="0 0 17.4 12.4"><path d="M8.6 0.6 H15.4 Q17.2 0.6 16.2 2.1 L10 10.9 Q9.4 11.8 8.2 11.8 H1.6 Q-0.2 11.8 0.8 10.3 L7 1.5 Q7.6 0.6 8.6 0.6 Z" fill="#FFFFFF"/><rect x="3" y="7.9" width="5.6" height="1.3" fill="#19232D"/></svg>
<svg class="ic" style="left:1420.5px;top:456.3px" width="17" height="15" viewBox="0 0 17 15"><rect x="0" y="0" width="13" height="2.5" fill="#FFFFFF"/><rect x="0" y="4.3" width="13" height="2.5" fill="#FFFFFF"/><rect x="0" y="8.5" width="13" height="2.5" fill="#FFFFFF"/><path d="M9.4 11.4 H16 L12.7 14.4 Z" fill="#8A949C"/></svg>
<svg class="ic" style="left:600.4px;top:880.4px" width="14" height="12.6" viewBox="0 0 14 12.6"><path d="M3.6 0.9 L1 3.5 L3.6 6.1 M7 0.9 L9.6 3.5 L7 6.1" fill="none" stroke="#FFFFFF" stroke-width="1.6"/><path d="M4.8 8.2 L7.4 10.8 L13 5.2" fill="none" stroke="#FFFFFF" stroke-width="1.7"/></svg>
<svg class="ic" style="left:767.4px;top:879px" width="13" height="13.2" viewBox="0 0 13 13.2"><path d="M6.5 0.9 L11.9 3.8 V9.6 L6.5 12.5 L1.1 9.6 V3.8 Z" fill="none" stroke="#FFFFFF" stroke-width="1.9" stroke-linejoin="round"/><path d="M1.3 3.9 L6.5 6.8 L11.7 3.9 M6.5 6.8 V12.3" fill="none" stroke="#FFFFFF" stroke-width="1.8"/></svg><!--/ICONS2-->
</body>
</html>
